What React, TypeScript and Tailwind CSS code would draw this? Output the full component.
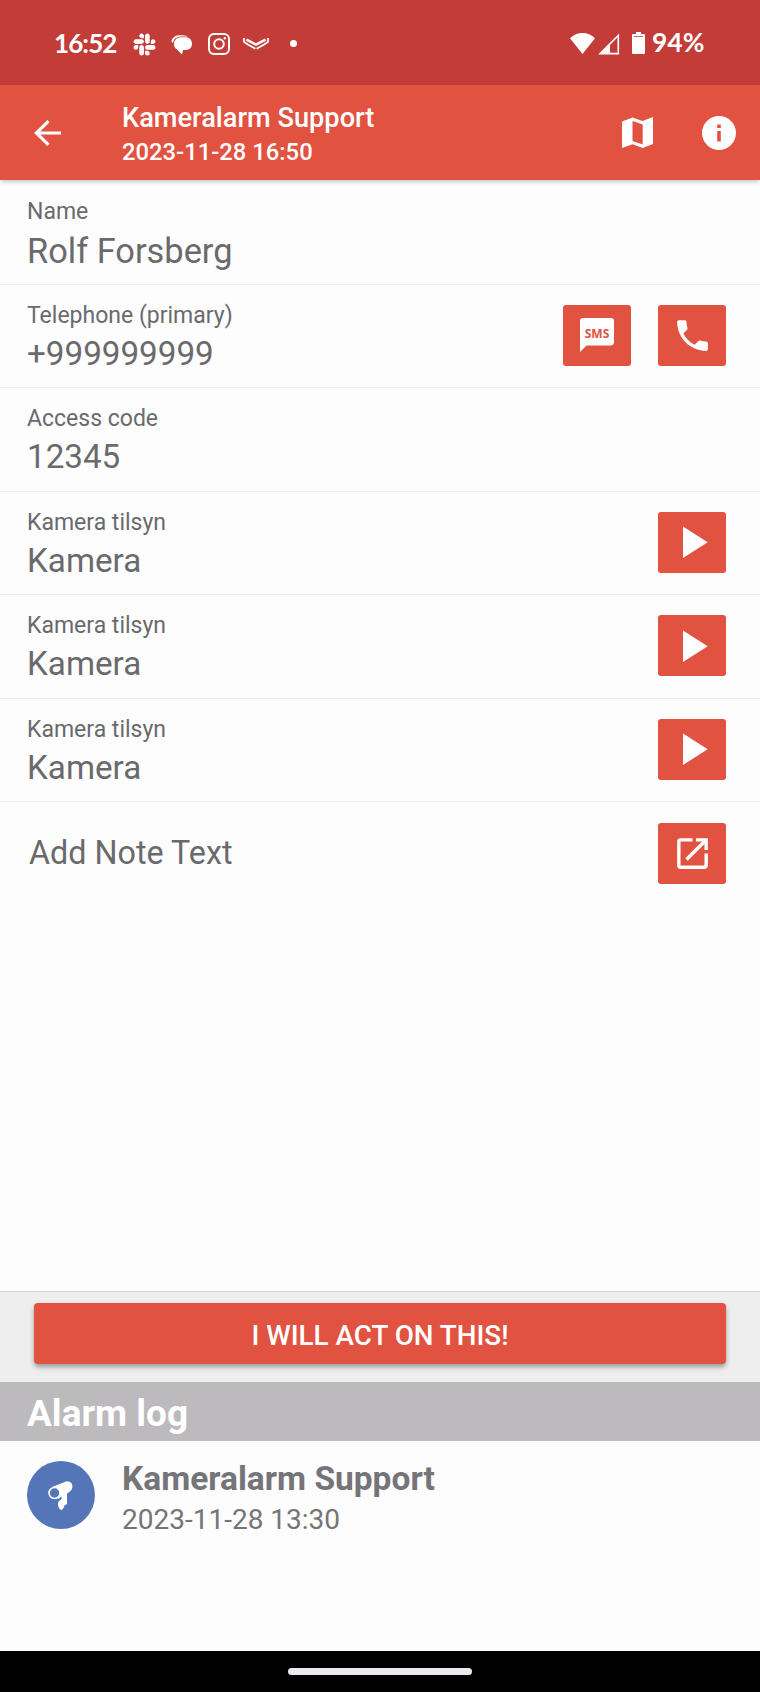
import { type ReactNode } from "react";
import { FaSlack } from "react-icons/fa";

type Field = {
  label: string;
  value: string;
  large?: boolean;
  actions?: ReactNode;
};

function PhoneIcon() {
  return (
    <svg viewBox="0 0 24 24" className="size-[41px]" fill="currentColor">
      <path d="M6.62 10.79c1.44 2.83 3.76 5.14 6.59 6.59l2.2-2.2c.27-.27.67-.36 1.02-.24 1.12.37 2.33.57 3.57.57.55 0 1 .45 1 1V20c0 .55-.45 1-1 1-9.39 0-17-7.61-17-17 0-.55.45-1 1-1h3.5c.55 0 1 .45 1 1 0 1.25.2 2.45.57 3.57.11.35.03.74-.25 1.02l-2.2 2.2z" />
    </svg>
  );
}

function PlayIcon() {
  return (
    <svg viewBox="0 0 68 62" className="h-[62px] w-[68px]" fill="currentColor">
      <path d="M25 15.5v31.500l24.700-15.700z" />
    </svg>
  );
}

function OpenIcon() {
  return (
    <svg viewBox="0 0 24 24" className="size-[41px]" fill="currentColor">
      <path d="M19 19H5V5h7V3H5a2 2 0 0 0-2 2v14a2 2 0 0 0 2 2h14c1.100 0 2-.9 2-2v-7h-2v7zM14 3v2h3.590l-9.830 9.830 1.410 1.410L19 6.410V10h2V3h-7z" />
    </svg>
  );
}

function SmsIcon() {
  return (
    <svg viewBox="0 0 34 34" className="size-[34px]">
      <path d="M3 0h28a3 3 0 0 1 3 3v21a3.500 3.500 0 0 1-3.500 3.500H6.500L0 34V3a3 3 0 0 1 3-3z" fill="currentColor" />
      <text x="17" y="19.500" textAnchor="middle" fontFamily="Open Sans" fontWeight="700" fontSize="12" fill="#e15241">
        SMS
      </text>
    </svg>
  );
}

function StatusBar() {
  return (
    <div className="h-[85px] bg-[#c33c38] flex items-center px-[54px] text-white">
      <span className="font-[Lato] font-bold text-[26px] leading-none tracking-[-0.9px] w-[64px] whitespace-nowrap">
        16:52
      </span>
      <FaSlack size={25} className="ml-[14px] mt-[3px]" />
      <svg viewBox="0 0 22 20" className="w-[22px] h-[20px] ml-[14px] mt-[4px]" fill="currentColor">
        <path d="M10 2.300h4.500C18.500 2.300 21 5 21 8.800S18.500 15 15 15h-3L11 19.500 6 14.600C3.800 13.300 3 11.300 3 9.300 3 5 6 2.300 10 2.300z" />
        <path d="M17 1.500C14.500.2 11 0 7.500.2 4 .5 1.500 2.500.3 6L2 8.200C2.500 4.200 5.500 1.700 9.500 1.500z" />
      </svg>
      <svg viewBox="0 0 22 22" className="size-[22px] ml-[15px] mt-[3px]" fill="none" stroke="currentColor" strokeWidth="2">
        <rect x="1" y="1" width="20" height="20" rx="5" />
        <circle cx="11" cy="11" r="4.800" />
        <circle cx="16.800" cy="5.200" r="1.200" fill="currentColor" stroke="none" />
      </svg>
      <svg viewBox="0 0 26 12" className="w-[26px] h-[12px] ml-[13px] mt-[2px]" fill="none" stroke="currentColor">
        <path d="M1 0v3.800l3.500 2.400L12.400 10.700M25 0v3.800l-3.500 2.400-7.900 4.500" strokeWidth="1.800" />
        <path d="M3.500 1.600L13 6.700l9.500-5.100" strokeWidth="2.500" />
      </svg>
      <span className="size-[7px] rounded-full bg-white ml-[21px] mt-[2px]" />

      <div className="ml-auto flex items-center">
        <svg viewBox="0 0 25 21" className="w-[25px] h-[21px] mt-[2px]" fill="currentColor">
          <path d="M0 5.200Q5.500 0 12.500 0T25 5.200L12.500 21z" />
        </svg>
        <svg viewBox="0 0 22 22" className="size-[22px] ml-[3px] mt-[2px]" fill="none" stroke="currentColor" strokeWidth="1.600">
          <path d="M2.200 20.600L20.300 2.400v18.200z" />
          <path d="M1 21L12 10.500V21z" fill="currentColor" stroke="none" />
        </svg>
        <svg viewBox="0 0 13 22" className="w-[13px] h-[22px] ml-[12px] mt-[1px]" fill="currentColor">
          <path d="M4 0h5v2h3a1 1 0 0 1 1 1v18a1 1 0 0 1-1 1H1a1 1 0 0 1-1-1V3a1 1 0 0 1 1-1h3z" />
          <path d="M2 4.500h9" stroke="#c33c38" strokeWidth=".8" />
        </svg>
        <span className="font-[Lato] font-bold text-[26.500px] leading-none ml-[7px] w-[54px] whitespace-nowrap">94%</span>
      </div>
    </div>
  );
}

function Header() {
  return (
    <div className="relative h-[95px] bg-[#e15241] flex items-center text-white shadow-[0_3px_4px_-1px_rgba(0,0,0,0.22)]">
      <svg viewBox="0 0 27 26" className="w-[27px] h-[26px] ml-[34px]" fill="none" stroke="currentColor" strokeWidth="3.200">
        <path d="M14.500 1.200L2.400 13l12.100 11.800M2.400 13H27" />
      </svg>
      <div className="ml-[61px] pt-[5px] font-medium">
        <h1 className="text-[27.200px] leading-[35px] whitespace-nowrap">Kameralarm Support</h1>
        <p className="text-[23.800px] leading-[33px] whitespace-nowrap">2023-11-28 16:50</p>
      </div>
      <svg viewBox="0 0 31 31" className="size-[31px] ml-auto" fill="currentColor" fillRule="evenodd">
        <path d="M0 4.500L10.500.5l10 3.500L31 0v27l-10.300 4-10.200-3.700L0 31zM10.500 4v20l10.200 3.500v-20z" />
      </svg>
      <svg viewBox="0 0 34 34" className="size-[34px] ml-[49px] mr-[24px]" fill="currentColor">
        <circle cx="17" cy="17" r="17" />
        <path d="M15.200 8.500h3.600V12h-3.600zM15.200 15h3.600v10.500h-3.600z" fill="#e15241" />
      </svg>
    </div>
  );
}

function ActionButton({ children }: { children: ReactNode }) {
  return (
    <button className="w-[68px] h-[61px] rounded-[3px] bg-[#e15241] text-white flex items-center justify-center">
      {children}
    </button>
  );
}

const play = (
  <ActionButton>
    <PlayIcon />
  </ActionButton>
);

const fields: Field[] = [
  { label: "Name", value: "Rolf Forsberg", large: true },
  {
    label: "Telephone (primary)",
    value: "+999999999",
    actions: (
      <>
        <ActionButton>
          <SmsIcon />
        </ActionButton>
        <ActionButton>
          <PhoneIcon />
        </ActionButton>
      </>
    ),
  },
  { label: "Access code", value: "12345" },
  { label: "Kamera tilsyn", value: "Kamera", actions: play },
  { label: "Kamera tilsyn", value: "Kamera", actions: play },
  { label: "Kamera tilsyn", value: "Kamera", actions: play },
];

function FieldRow({ field }: { field: Field }) {
  return (
    <div className="h-[103.500px] border-b border-[#ededee] flex items-start justify-between pl-[27px] pr-[34px]">
      <div className="pt-[13px] text-[#6a6a6c] whitespace-nowrap">
        <p className="text-[23px] leading-[36px]">{field.label}</p>
        <p className={field.large ? "text-[34.400px] leading-[42px]" : "text-[33.200px] leading-[40px]"}>
          {field.value}
        </p>
      </div>
      <div className="flex gap-[27px] pt-[20px]">{field.actions}</div>
    </div>
  );
}

export default function App() {
  return (
    <div className="w-[760px] h-[1692px] bg-[#fdfdfe] font-[Roboto,sans-serif] flex flex-col overflow-hidden">
      <StatusBar />
      <Header />

      {/* Alarm details */}
      <div className="flex-1 pt-[1px]">
        {fields.map((field, index) => (
          <FieldRow key={index} field={field} />
        ))}
        <div className="flex items-center justify-between h-[103px] pl-[29px] pr-[34px]">
          <p className="text-[32.300px] text-[#6a6a6c] whitespace-nowrap">Add Note Text</p>
          <ActionButton>
            <OpenIcon />
          </ActionButton>
        </div>
      </div>

      <div className="h-[91px] bg-[#eeeeef] border-t border-[#d3d3d6] pt-[11px] px-[34px]">
        <button className="w-full h-[61px] pt-[4px] rounded-[4px] bg-[#e15241] text-white text-[27.800px] font-medium shadow-[0_3px_5px_rgba(0,0,0,0.35)]">
          I WILL ACT ON THIS!
        </button>
      </div>

      {/* Alarm log */}
      <div className="h-[59px] bg-[#bcbabc] flex items-center pl-[27px] pt-[4px] text-white text-[37px] font-bold">
        Alarm log
      </div>
      <div className="h-[210px] flex items-start pl-[27px] pt-[20px]">
        <div className="size-[68px] rounded-full bg-[#5476b8] flex items-center justify-center text-white">
          <svg viewBox="0 0 68 68" className="size-[68px]" fill="currentColor">
            <path d="M25 26L39 20.500Q43 19.500 45 23Q46.500 28 43 30.500L40 32.500V43L37.500 44.500Q36 49 34 49Q31 47 31 43Q31 39.500 34.500 38.500V35.500L31 38z" />
            <circle cx="27.500" cy="32" r="5.500" fill="#5476b8" stroke="currentColor" strokeWidth="1.500" />
          </svg>
        </div>
        <div className="ml-[27px] -mt-[1px] text-[#757478] whitespace-nowrap">
          <p className="text-[33.500px] leading-[38px] font-bold">Kameralarm Support</p>
          <p className="text-[28px] leading-[43px]">2023-11-28 13:30</p>
        </div>
      </div>

      <div className="h-[41px] bg-black flex items-center justify-center">
        <div className="w-[184px] h-[7px] rounded-full bg-[#ebe9ed]" />
      </div>
    </div>
  );
}
